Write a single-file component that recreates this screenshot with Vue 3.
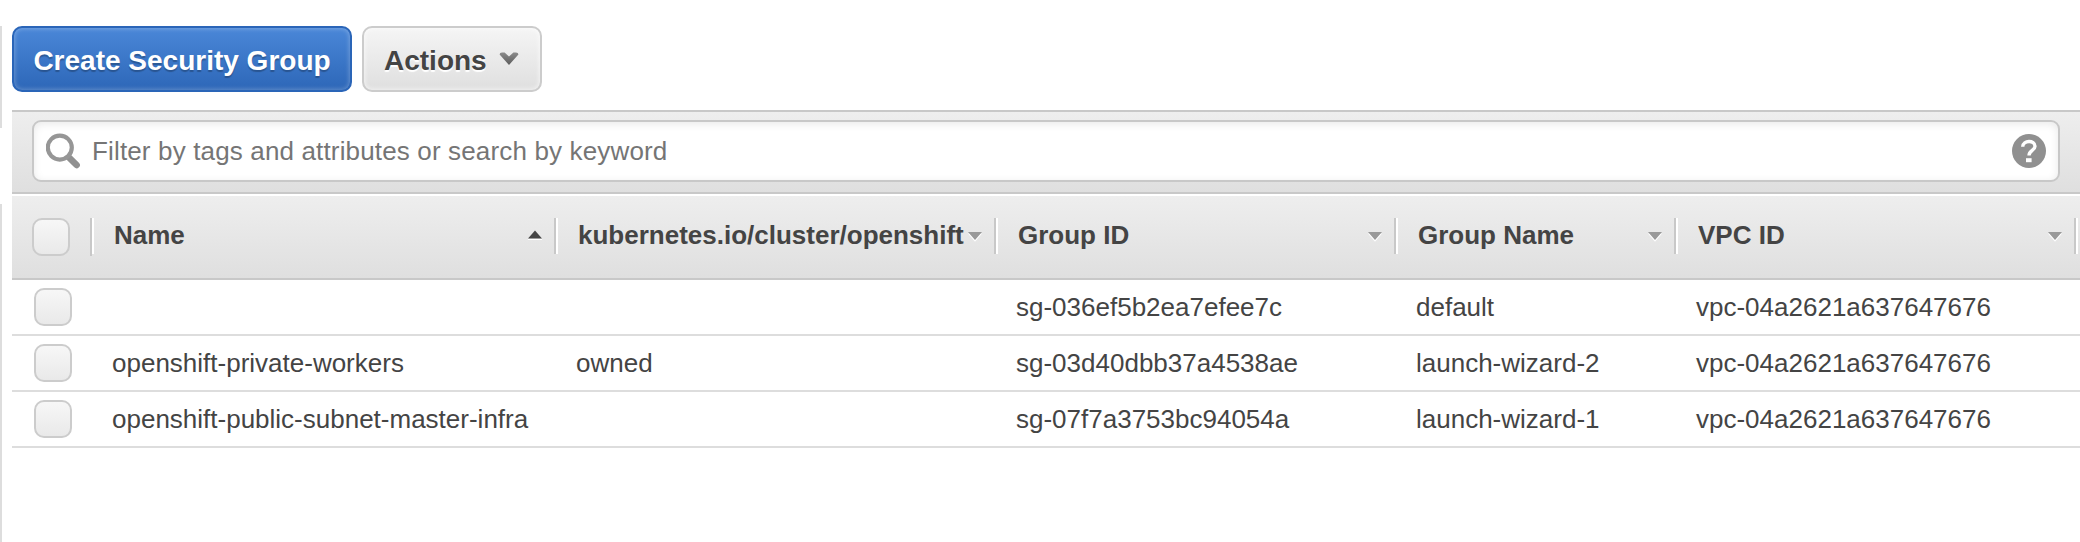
<script setup>
const columns = [
  { key: 'name', label: 'Name', sorted: true },
  { key: 'cluster', label: 'kubernetes.io/cluster/openshift' },
  { key: 'groupId', label: 'Group ID' },
  { key: 'groupName', label: 'Group Name' },
  { key: 'vpcId', label: 'VPC ID' },
]
const rows = [
  { name: '', cluster: '', groupId: 'sg-036ef5b2ea7efee7c', groupName: 'default', vpcId: 'vpc-04a2621a637647676' },
  { name: 'openshift-private-workers', cluster: 'owned', groupId: 'sg-03d40dbb37a4538ae', groupName: 'launch-wizard-2', vpcId: 'vpc-04a2621a637647676' },
  { name: 'openshift-public-subnet-master-infra', cluster: '', groupId: 'sg-07f7a3753bc94054a', groupName: 'launch-wizard-1', vpcId: 'vpc-04a2621a637647676' },
]
</script>

<template>
  <div class="page">
    <div class="rail">
      <div class="rail-top"></div>
      <div class="rail-bottom"></div>
    </div>
    <main class="content">
      <div class="actions">
        <button class="btn primary"><span>Create Security Group</span></button>
        <button class="btn secondary">
          <span>Actions</span>
          <svg class="chevron" width="20" height="15" viewBox="0 0 20 15">
            <defs>
              <linearGradient id="chevronFill" x1="0" y1="0" x2="0" y2="1">
                <stop offset="0" stop-color="#8c8c8c" />
                <stop offset="1" stop-color="#5c5c5c" />
              </linearGradient>
            </defs>
            <path d="M0.6 2.4 Q0.6 0.4 3 0.4 H5.6 L10 4.6 L14.4 0.4 H17 Q19.4 0.4 19.4 2.4 L10 13 Z" fill="url(#chevronFill)" />
          </svg>
        </button>
      </div>
      <div class="filter">
        <div class="search">
          <svg class="lens" width="36" height="38" viewBox="0 0 36 38">
            <path d="M23.5 25 L30.6 32" stroke="#909090" stroke-width="6.6" stroke-linecap="round" />
            <circle cx="13.8" cy="14.6" r="12" fill="none" stroke="#969696" stroke-width="4.2" />
          </svg>
          <span class="placeholder">Filter by tags and attributes or search by keyword</span>
          <svg class="help" width="34" height="34" viewBox="0 0 34 34">
            <circle cx="17" cy="17" r="17" fill="#909090" />
            <path d="M10.7 12.8 C11 5.8 23 5.8 23 12.2 C23 16.6 17 16.4 17 21.6" fill="none" stroke="#fff" stroke-width="3.4" />
            <rect x="14" y="24.2" width="5.6" height="4" fill="#fff" />
          </svg>
        </div>
      </div>
      <div class="grid head">
        <div class="pick"><i class="box"></i></div>
        <div v-for="c in columns" :key="c.key" class="th">
          <span class="label">{{ c.label }}</span>
          <svg class="sort" width="16" height="14" viewBox="0 0 16 14">
            <template v-if="c.sorted">
              <path d="M1 9.6 H15 V11 H1 Z" fill="#fff" />
              <path d="M1 9.4 L8 1.6 L15 9.4 Z" fill="#444" />
            </template>
            <template v-else>
              <path d="M1 4.6 L8 12.8 L15 4.6 Z" fill="#fff" />
              <path d="M1 3 H15 L8 11 Z" fill="#999" />
            </template>
          </svg>
        </div>
      </div>
      <div v-for="r in rows" :key="r.groupId" class="grid row">
        <div class="pick"><i class="box"></i></div>
        <div v-for="c in columns" :key="c.key" class="td">{{ r[c.key] }}</div>
      </div>
    </main>
  </div>
</template>

<style>
body { margin: 0; background: #fff; }
</style>

<style scoped>
.page {
  display: flex;
  width: 2080px;
  height: 542px;
  overflow: hidden;
  box-sizing: border-box;
  font-family: "Liberation Sans", Arial, Helvetica, sans-serif;
  font-size: 26px;
  color: #444;
}
.rail { width: 12px; flex: none; padding-top: 26px; box-sizing: border-box; }
.rail-top { width: 2px; height: 102px; background: #ddd; }
.rail-bottom { width: 2px; height: 338px; margin-top: 76px; background: #ddd; }
.content { flex: 1; min-width: 0; }
.actions { display: flex; gap: 10px; height: 110px; padding-top: 26px; box-sizing: border-box; }
.btn {
  display: flex;
  align-items: center;
  height: 66px;
  box-sizing: border-box;
  padding: 4px 0 0;
  border-radius: 10px;
  font: bold 28px/34px "Liberation Sans", Arial, sans-serif;
  white-space: nowrap;
}
.primary {
  width: 340px;
  justify-content: center;
  color: #fff;
  border: 2px solid #2a65b8;
  background: linear-gradient(#4a87d8, #2d67b8);
  box-shadow: inset 0 0 4px 1px rgba(255, 255, 255, .25);
  text-shadow: 0 2px 1px rgba(0, 0, 0, .25);
}
.secondary {
  width: 180px;
  padding-left: 20px;
  color: #444;
  border: 2px solid #ccc;
  background: linear-gradient(#f5f5f5, #dfdfdf);
  box-shadow: inset 0 0 4px 1px rgba(255, 255, 255, .6);
  text-shadow: 0 2px 1px #fff;
}
.chevron { margin: 0 0 4px 12px; }
.filter {
  height: 84px;
  box-sizing: border-box;
  padding: 8px 20px 10px;
  border-top: 2px solid #c8c8c8;
  border-bottom: 2px solid #c8c8c8;
  background: linear-gradient(#eee, #dfdfdf);
}
.search {
  display: flex;
  align-items: center;
  height: 62px;
  box-sizing: border-box;
  padding: 0 12px;
  border: 2px solid #c8c8c8;
  border-radius: 9px;
  background: #fff;
  box-shadow: inset 0 2px 8px rgba(0, 0, 0, .09);
}
.lens { flex: none; margin-top: 2px; }
.placeholder { flex: 1; margin-left: 10px; color: #757575; letter-spacing: .15px; }
.help { flex: none; }
.grid { display: grid; grid-template-columns: 82px 464px 440px 400px 280px 400px; }
.head {
  height: 84px;
  margin-top: 2px;
  box-sizing: border-box;
  padding-top: 22px;
  border-bottom: 2px solid #c8c8c8;
  background: linear-gradient(#eee, #dfdfdf);
  font-weight: bold;
}
.pick { display: flex; box-sizing: border-box; }
.head .pick {
  height: 38px;
  padding-left: 20px;
  background: linear-gradient(#c8c8c8, #c8c8c8) 78px 0 / 2px 38px no-repeat,
    linear-gradient(#fff, #fff) 80px 0 / 2px 36px no-repeat;
}
.box {
  width: 38px;
  height: 38px;
  box-sizing: border-box;
  border: 2px solid #ccc;
  border-radius: 10px;
  background: linear-gradient(#f7f7f7, #e9e9e9);
}
.th {
  display: flex;
  align-items: center;
  justify-content: space-between;
  height: 36px;
  box-sizing: border-box;
  padding: 0 13px 0 20px;
  border-right: 2px solid #fff;
  box-shadow: inset -2px 0 #c8c8c8;
  white-space: nowrap;
}
.label { line-height: 30px; margin-top: -3px; min-width: 0; }
.sort { flex: none; }
.row { height: 56px; box-sizing: border-box; border-bottom: 2px solid #ddd; }
.row .pick { padding: 8px 0 0 22px; }
.td { padding-left: 18px; line-height: 54px; white-space: nowrap; }
</style>
